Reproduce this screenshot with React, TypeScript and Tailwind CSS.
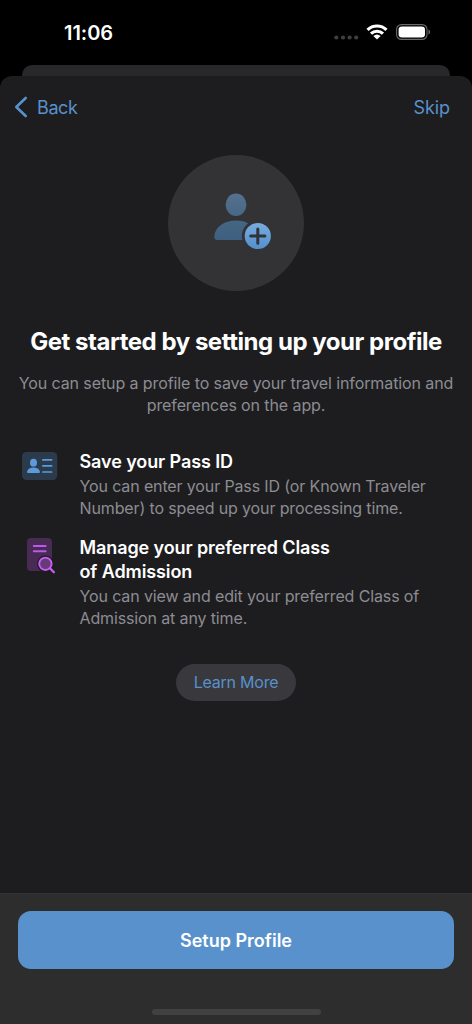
import type { ReactNode } from 'react';

interface FeatureProps {
  icon: ReactNode;
  title: ReactNode;
  children: ReactNode;
}

const StatusBar = () => {
  return (
    <div className="flex h-[65px] items-start justify-between pl-16 pr-[41px] pt-5 text-white">
      <span className="text-[20px] font-semibold leading-[26px] tracking-[-0.05px]">11:06</span>
      <div className="flex items-start" aria-hidden="true">
        <svg className="mt-[15px] h-[5px] w-[25px]" viewBox="0 0 25 5" fill="#3f3f41">
          <circle cx="2.3" cy="2.5" r="2.1" />
          <circle cx="9" cy="2.5" r="2.1" />
          <circle cx="15.6" cy="2.5" r="2.1" />
          <circle cx="22.2" cy="2.5" r="2.1" />
        </svg>
        <svg className="ml-[7px] mt-1 h-4 w-[22px]" viewBox="0 0 22 16" fill="none" stroke="white" strokeWidth="3.1">
          <path d="M1.5 5.9a13.7 13.7 0 0 1 19 0" />
          <path d="M5 9.7a8.6 8.6 0 0 1 12 0" />
          <path d="M11 15.6 7.4 12.1a5 5 0 0 1 7.2 0Z" fill="white" stroke="none" />
        </svg>
        <svg className="ml-2 mt-1 h-4 w-[35px]" viewBox="0 0 35 16">
          <rect x="0.6" y="0.6" width="30.4" height="14.8" rx="4.8" fill="none" stroke="#69696b" strokeWidth="1.1" />
          <rect x="2.6" y="2.5" width="26.4" height="11" rx="3.3" fill="white" />
          <path d="M32.5 5.5c2.2 1 2.2 4 0 5Z" fill="#69696b" />
        </svg>
      </div>
    </div>
  );
};

const ProfileIcon = () => {
  return (
    <svg className="h-[136px] w-[136px]" viewBox="0 0 136 136" aria-hidden="true">
      <defs>
        <linearGradient id="person" x1="0" y1="38" x2="0" y2="86" gradientUnits="userSpaceOnUse">
          <stop stopColor="#54718f" />
          <stop offset="0.6" stopColor="#456583" />
          <stop offset="1" stopColor="#405f80" />
        </linearGradient>
        <linearGradient id="badge" x1="0" y1="68" x2="0" y2="94" gradientUnits="userSpaceOnUse">
          <stop stopColor="#78acdf" />
          <stop offset="1" stopColor="#5290cd" />
        </linearGradient>
      </defs>
      <circle cx="68" cy="68" r="68" fill="#333336" />
      <ellipse cx="68" cy="49.8" rx="10.4" ry="11.3" fill="url(#person)" />
      <path d="M49.5 85C47.3 85 46 83.7 46.3 81.4C47 72 56 65.4 68 65.4C78 65.4 86.5 70 90 79V85Z" fill="url(#person)" />
      <circle cx="89.8" cy="81" r="16" fill="#333336" />
      <circle cx="89.8" cy="81" r="13.1" fill="url(#badge)" />
      <path d="M89.8 74v14.2M82.7 81.1h14.2" fill="none" stroke="#303338" strokeWidth="3" strokeLinecap="round" />
    </svg>
  );
};

const PassIcon = () => {
  return (
    <svg className="h-7 w-9" viewBox="0 0 36 28" aria-hidden="true">
      <rect x="0" y="0" width="35.3" height="28" rx="4.5" fill="#2c3b4b" />
      <g fill="#5b9bdb">
        <ellipse cx="11.5" cy="10.7" rx="3.5" ry="3.9" />
        <path d="M6.3 21C5.3 21 4.9 20.4 5.1 19.5C5.8 17 8.2 15.5 11.5 15.5S17.2 17 17.9 19.5C18.1 20.4 17.7 21 16.7 21Z" />
      </g>
      <path d="M20.9 7.9h8.7M20.9 13.9h8.7M20.9 20h8.7" stroke="#5b9bdb" strokeWidth="1.7" strokeLinecap="round" />
    </svg>
  );
};

const AdmissionIcon = () => {
  return (
    <svg className="ml-[5px] h-9 w-[29px]" viewBox="0 0 29 36" aria-hidden="true">
      <rect width="25" height="33" rx="4" fill="#472b54" />
      <path d="M6.8 8.1h11.8M6.8 13.2h11.8" stroke="#bd58e8" strokeWidth="2" strokeLinecap="round" />
      <circle cx="18.4" cy="25.8" r="8.3" fill="#1d1d1f" />
      <path d="m23.4 30.9 3.5 3.4" stroke="#1d1d1f" strokeWidth="4.5" />
      <circle cx="18.4" cy="25.8" r="6.2" fill="#673b79" stroke="#ca5df8" strokeWidth="1.9" />
      <path d="m23.2 30.5 3.7 3.8" stroke="#ca5df8" strokeWidth="2.3" strokeLinecap="round" />
    </svg>
  );
};

const Feature = ({ icon, title, children }: FeatureProps) => {
  return (
    <li className="flex items-start">
      <div className="w-[57.5px] shrink-0 pt-[2px]">{icon}</div>
      <div>
        <h2 className="text-[18px] font-semibold leading-6 tracking-[-0.1px] text-white">{title}</h2>
        <p className="mt-px whitespace-nowrap text-[16px] leading-[22px] tracking-[-0.13px] text-[#8c8c92]">{children}</p>
      </div>
    </li>
  );
};

export default function App() {
  return (
    <div className="flex h-[1024px] w-[472px] flex-col overflow-hidden bg-black font-['Inter','Liberation_Sans',sans-serif]">
      <StatusBar />
      <div className="mx-[22px] h-[11px] shrink-0 rounded-t-[10px] bg-[#28282a]" />

      <div className="flex flex-1 flex-col rounded-t-[12px] bg-[#1d1d1f]">
        <nav className="flex h-[62px] items-center justify-between pl-[14px] pr-[22px] text-[18px] text-[#5891cb]">
          <button className="flex items-center">
            <svg className="h-[22px] w-[14px]" viewBox="0 0 14 22" fill="none" aria-hidden="true">
              <path d="M11.7 2 2.3 11l9.4 9" stroke="currentColor" strokeWidth="2.6" strokeLinecap="round" strokeLinejoin="round" />
            </svg>
            <span className="ml-[9px] tracking-[-0.4px]">Back</span>
          </button>
          <button className="tracking-[-0.1px]">Skip</button>
        </nav>

        <main className="flex flex-1 flex-col items-center pt-[17px]">
          <ProfileIcon />
          <h1 className="mt-9 whitespace-nowrap text-[24px] font-bold leading-[30px] tracking-[-0.47px] text-white">
            Get started by setting up your profile
          </h1>
          <p className="mt-[15px] whitespace-nowrap text-center text-[16px] leading-[22px] tracking-[-0.1px] text-[#8c8c92]">
            You can setup a profile to save your travel information and
            <br />
            preferences on the app.
          </p>

          <ul className="mt-[34px] flex w-full flex-col gap-[17px] pl-[22px]">
            <Feature icon={<PassIcon />} title="Save your Pass ID">
              You can enter your Pass ID (or Known Traveler
              <br />
              Number) to speed up your processing time.
            </Feature>
            <Feature
              icon={<AdmissionIcon />}
              title={
                <>
                  Manage your preferred Class
                  <br />
                  of Admission
                </>
              }
            >
              You can view and edit your preferred Class of
              <br />
              Admission at any time.
            </Feature>
          </ul>

          <button className="mt-[35px] h-[37px] w-[120px] rounded-full bg-[#39393d] pb-0.5 text-[16px] tracking-[-0.23px] text-[#5891cb]">
            Learn More
          </button>
        </main>

        <footer className="flex h-[131px] flex-col items-center border-t border-[#333335] bg-[#2d2d2d] pt-[17px]">
          <button className="h-[58px] w-[436px] rounded-[13px] bg-[#5891cb] text-[18px] font-semibold text-white">
            Setup Profile
          </button>
          <div className="mt-10 h-[6px] w-[169px] rounded-full bg-[#414141]" />
        </footer>
      </div>
    </div>
  );
}
